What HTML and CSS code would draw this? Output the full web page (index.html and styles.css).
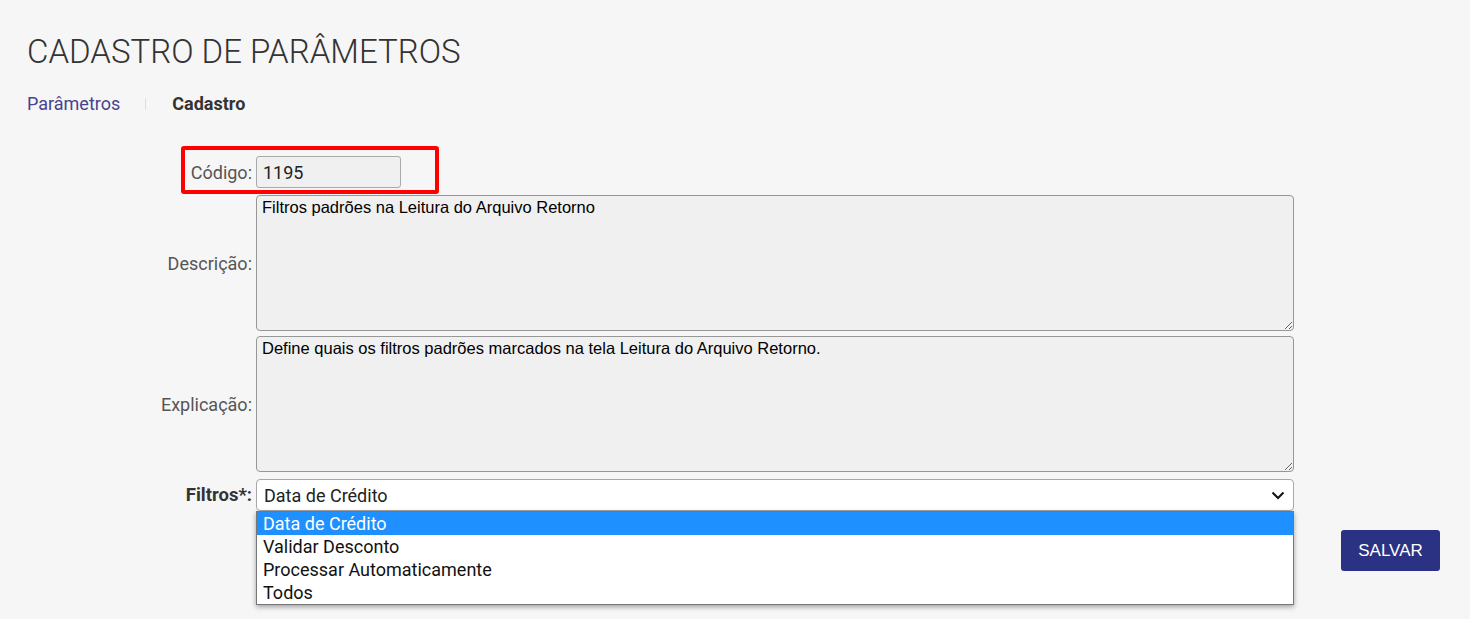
FILE: index.html
```html
<!DOCTYPE html>
<html lang="pt-BR">
<head>
    <meta charset="UTF-8">
    <meta name="viewport" content="width=device-width, initial-scale=1.0">
    <title>Cadastro de Parâmetros</title>
    <link rel="stylesheet" href="styles.css">
</head>
<body>
    <!-- Cabeçalho -->
    <header class="page-header">
        <h1>CADASTRO DE PARÂMETROS</h1>
        <nav class="breadcrumb">
            <a href="#" class="breadcrumb-link">Parâmetros</a>
            <span class="breadcrumb-sep"></span>
            <span class="breadcrumb-current">Cadastro</span>
        </nav>
    </header>

    <form class="param-form">
        <div class="form-row">
            <label class="form-label">Código:</label>
            <div class="field-code">
                <input type="text" class="input-code" value="1195" disabled>
                <span class="highlight-box"></span>
            </div>
        </div>

        <div class="form-row row-descricao">
            <label class="form-label">Descrição:</label>
            <textarea class="form-textarea" disabled>Filtros padrões na Leitura do Arquivo Retorno</textarea>
        </div>

        <div class="form-row row-explicacao">
            <label class="form-label">Explicação:</label>
            <textarea class="form-textarea" disabled>Define quais os filtros padrões marcados na tela Leitura do Arquivo Retorno.</textarea>
        </div>

        <div class="form-row row-filtros">
            <label class="form-label required">Filtros*:</label>
            <div class="select-wrap">
                <div class="select-box">
                    <span>Data de Crédito</span>
                    <svg class="select-chevron" width="14" height="9" viewBox="0 0 14 9">
                        <path d="M1.5 1.5l5.5 5.5 5.5-5.5" fill="none" stroke="#111" stroke-width="2"/>
                    </svg>
                </div>
                <ul class="select-options">
                    <li class="selected">Data de Crédito</li>
                    <li>Validar Desconto</li>
                    <li>Processar Automaticamente</li>
                    <li>Todos</li>
                </ul>
            </div>
        </div>

        <div class="form-actions">
            <button type="button" class="btn-salvar">SALVAR</button>
        </div>
    </form>
</body>
</html>
```

FILE: styles.css
```css
* {
    margin: 0;
    padding: 0;
    box-sizing: border-box;
}

body {
    font-family: Roboto, 'Noto Sans', sans-serif;
    background: #f6f6f6;
    color: #333;
    min-height: 100vh;
}

.page-header {
    padding: 32px 0 0 27px;
}

.page-header h1 {
    font-size: 33px;
    font-weight: 300;
    line-height: 39px;
    color: #333;
}

.breadcrumb {
    margin-top: 21px;
    display: flex;
    align-items: center;
    font-size: 18px;
    line-height: 24px;
}

.breadcrumb-link {
    color: #4a4191;
    text-decoration: none;
}

.breadcrumb-sep {
    width: 1px;
    height: 12px;
    background: #ddd;
    margin: 0 26px 0 25px;
}

.breadcrumb-current {
    font-weight: 700;
    color: #333;
}

/* Formulário */
.param-form {
    margin-top: 40px;
    padding-right: 30px;
}

.form-row {
    display: flex;
    align-items: center;
    gap: 4px;
}

.form-label {
    width: 252px;
    text-align: right;
    font-size: 18px;
    color: #555;
}

.form-label.required {
    font-weight: 700;
    font-size: 18.5px;
    color: #333;
}

.field-code {
    position: relative;
}

.input-code {
    display: block;
    width: 145px;
    height: 32px;
    padding: 0 6px;
    border: 1px solid #a9a9a9;
    border-radius: 3px;
    background: #f0f0f0;
    font-family: Roboto, sans-serif;
    font-size: 18px;
    color: #222;
}

.highlight-box {
    position: absolute;
    left: -75px;
    top: -10px;
    width: 258px;
    height: 48px;
    border: 4px solid #ff0000;
    border-radius: 3px;
    pointer-events: none;
}

.row-descricao {
    margin-top: 7px;
}

.row-explicacao {
    margin-top: 5px;
}

.row-filtros {
    margin-top: 7px;
}

.form-textarea {
    display: block;
    width: 1038px;
    height: 136px;
    padding: 2px 5px;
    border: 1px solid #979797;
    border-radius: 4px;
    background: #f0f0f0;
    font-family: 'Liberation Sans', Arial, sans-serif;
    font-size: 16.5px;
    color: #000;
    resize: both;
}

.select-wrap {
    position: relative;
    width: 1038px;
}

.select-box {
    height: 32px;
    display: flex;
    align-items: center;
    justify-content: space-between;
    padding: 0 7px 0 7px;
    background: #fff;
    border: 1px solid #a8a8a8;
    border-radius: 4px;
    font-size: 18px;
    color: #222;
}

.select-chevron {
    margin-right: 1px;
}

.select-options {
    list-style: none;
    position: absolute;
    top: 32px;
    left: 0;
    right: 0;
    background: #fff;
    border: 1px solid #767676;
    box-shadow: 0 2px 5px rgba(0, 0, 0, 0.35);
    z-index: 10;
}

.select-options li {
    height: 23px;
    line-height: 23px;
    padding-left: 6px;
    font-size: 18px;
    color: #111;
}

.select-options li.selected {
    background: #1e90ff;
    color: #fff;
}

.form-actions {
    margin-top: 19px;
    display: flex;
    justify-content: flex-end;
}

.btn-salvar {
    width: 99px;
    height: 41px;
    background: #2b3283;
    color: #fff;
    border: none;
    border-radius: 3px;
    font-family: 'Liberation Sans', Arial, sans-serif;
    font-size: 17px;
    cursor: pointer;
}
```
